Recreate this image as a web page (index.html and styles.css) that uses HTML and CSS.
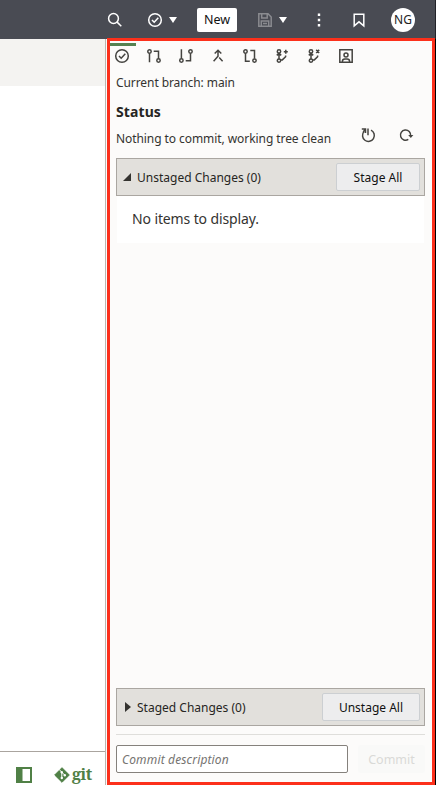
FILE: index.html
```
<!DOCTYPE html>
<html lang="en">
<head>
<meta charset="utf-8">
<title>Git panel</title>
<link rel="stylesheet" href="styles.css">
</head>
<body>
<div class="app">
  <header class="topbar">
    <svg class="icon search" viewBox="0 0 16 16"><circle cx="6.5" cy="6.5" r="4.9"/><path d="M10.1 10.1L14.3 14.3"/></svg>
    <svg class="icon validate" viewBox="0 0 16 16"><circle cx="8" cy="8" r="6.3"/><path d="M5 8l2.2 2.2L11.3 5.8"/></svg>
    <i class="caret"></i>
    <button class="new">New</button>
    <svg class="icon save" viewBox="0 0 16 16"><path d="M1.8 1.8H11l3.2 3.2v9.2H1.8zM4.7 2v4h5.5V2M4.3 14V9h7.4v5M6 11.5h4"/></svg>
    <i class="caret"></i>
    <svg class="icon more" viewBox="0 0 16 16"><path d="M6.8 1.5h2.4v2.4H6.8zM6.8 6.8h2.4v2.4H6.8zM6.8 12.1h2.4v2.4H6.8z"/></svg>
    <svg class="icon bookmark" viewBox="0 0 16 16"><path d="M3.2 2.2h9.6v11.6L8 9.8l-4.8 4z"/></svg>
    <span class="avatar">NG</span>
  </header>
  <div class="workspace">
    <div class="editor">
      <div class="editor-tabs"></div>
      <div class="canvas"></div>
      <footer class="statusbar">
        <svg class="layout-icon" viewBox="0 0 16 16"><path fill-rule="evenodd" d="M0 0h16v16H0zM6.5 2v12H14V2z"/></svg>
        <svg class="git-mark" viewBox="0 0 16 16"><path class="diamond" d="M8 .7L15.3 8 8 15.3.7 8z"/><path class="branch" d="M5.2 2.6L7.8 5.2V11M8 5.4l2.7 2.7"/><circle cx="7.8" cy="5.3" r="1.2"/><circle cx="7.8" cy="11" r="1.2"/><circle cx="10.8" cy="8.2" r="1.2"/></svg>
        <span class="git-word">git</span>
      </footer>
    </div>
    <section class="panel">
      <nav class="tabs">
        <a class="tab active"><svg class="icon" viewBox="0 0 16 16"><circle cx="8" cy="8" r="6.3"/><path d="M5 8l2.2 2.2L11.3 5.8"/></svg></a>
        <a class="tab"><svg class="icon" viewBox="0 0 16 16"><circle cx="3.5" cy="3.5" r="1.7"/><path d="M3.5 5.2v9M7.7 3.3h4.8v7.4"/><circle cx="12.5" cy="12.5" r="1.7"/></svg></a>
        <a class="tab"><svg class="icon" viewBox="0 0 16 16"><path d="M3.4 1.2v9.4M7.7 12.7h4.8V5.2"/><circle cx="3.4" cy="12.5" r="1.7"/><circle cx="12.5" cy="3.5" r="1.7"/></svg></a>
        <a class="tab"><svg class="icon" viewBox="0 0 16 16"><path d="M8 2.5v5.8l-4.4 5M4.7 5.5L8 2.3l3.3 3.2M9.2 9.6l3.4 3.7"/></svg></a>
        <a class="tab"><svg class="icon" viewBox="0 0 16 16"><circle cx="3.5" cy="3.5" r="1.7"/><path d="M3.5 5.2v8h4.3M8.3 2.4h4.2v8.3"/><circle cx="12.5" cy="12.6" r="1.7"/></svg></a>
        <a class="tab"><svg class="icon" viewBox="0 0 16 16"><circle cx="5" cy="3.4" r="1.7"/><circle cx="5" cy="12.6" r="1.7"/><path d="M5 5.1v5.8M2.8 7.4L5 5.3l2.2 2.1M6.7 11.9h1.6l3.3-3.2V7.4M11.8 1.7v4M9.8 3.7h4"/></svg></a>
        <a class="tab"><svg class="icon" viewBox="0 0 16 16"><circle cx="5" cy="3.4" r="1.7"/><circle cx="5" cy="12.6" r="1.7"/><path d="M5 5.1v5.8M2.8 7.4L5 5.3l2.2 2.1M6.7 11.9h1.6l3.3-3.2V7.4M10.2 1.9l3 3M13.2 1.9l-3 3"/></svg></a>
        <a class="tab"><svg class="icon" viewBox="0 0 16 16"><path d="M1.8 1.8h12.4v12.4H1.8zM4.4 14v-.6q0-2.3 2.4-2.3h2.4q2.4 0 2.4 2.3v.6"/><circle cx="8" cy="6.9" r="2"/></svg></a>
      </nav>
      <div class="content">
        <div class="branch-name"><span>Current branch: main</span></div>
        <h2>Status</h2>
        <div class="status-row">
          <span class="status-text">Nothing to commit, working tree clean</span>
          <svg class="icon reset" viewBox="0 0 16 16"><path d="M11 3.2a5.9 5.9 0 1 1-7 1.4M1.8 2.1h3.7V6M5.3 2.3L3.2 5M8 1.5v6.7"/></svg>
          <svg class="icon refresh" viewBox="0 0 16 16"><path d="M10.3 12.4A5.1 5.1 0 1 1 12.6 8.8"/><path class="solid" d="M10.2 8h5.2l-2.6 2.9z"/></svg>
        </div>
        <div class="group">
          <i class="open"></i><span class="unstaged-label">Unstaged Changes (0)</span><button class="stage"><span>Stage All</span></button>
        </div>
        <div class="empty"><span>No items to display.</span></div>
        <div class="group staged">
          <i class="closed"></i><span class="staged-label">Staged Changes (0)</span><button class="unstage"><span>Unstage All</span></button>
        </div>
        <div class="commit-row">
          <input type="text" placeholder="Commit description">
          <button class="commit" disabled>Commit</button>
        </div>
      </div>
    </section>
  </div>
  <div class="highlight"></div>
</div>
</body>
</html>
```
FILE: styles.css
```
* { box-sizing: border-box; }
body { margin: 0; font-family: "Noto Sans", sans-serif; font-size: 12px; color: #343330; }
button, input { font: inherit; padding: 0; margin: 0; }
.app { position: relative; width: 436px; height: 785px; display: flex; flex-direction: column; overflow: hidden; background: #fff; }
.icon { width: 16px; height: 16px; flex: none; fill: none; stroke: #454440; stroke-width: 1.5; }

.topbar { height: 39px; flex: none; display: flex; align-items: center; background: #494b53; padding-left: 107px; border-right: 1px solid #222329; }
.topbar .icon { stroke: #fff; }
.validate { margin-left: 24px; }
.caret { flex: none; width: 0; height: 0; margin: 1px 0 0 6px; border: 4.5px solid transparent; border-top: 6px solid #fff; border-bottom: 0; }
.new { width: 40px; height: 24px; flex: none; margin-left: 20px; border: 0; border-radius: 2px; background: #fff; color: #111; font-size: 12.5px; }
.topbar .save { margin-left: 20px; stroke: #8a8b90; }
.topbar .more { margin-left: 24px; fill: #fff; stroke: none; }
.bookmark { margin-left: 24px; }
.avatar { width: 24px; height: 24px; flex: none; margin-left: 24px; border-radius: 50%; background: #fff; color: #222; text-align: center; line-height: 24px; }

.workspace { flex: 1; min-height: 0; display: flex; border-right: 1px solid #000; }
.editor { width: 106px; flex: none; display: flex; flex-direction: column; border-right: 1px solid #bbb5b0; }
.editor-tabs { height: 47px; background: #f4f3f1; }
.canvas { flex: 1; }
.statusbar { height: 34px; display: flex; align-items: flex-start; padding: 15px 0 0 16px; border-top: 1px solid #aaa49f; color: #508046; }
.layout-icon { width: 16px; height: 16px; fill: #508046; }
.git-mark { width: 16px; height: 16px; margin-left: 22px; }
.diamond { fill: #508046; stroke: #508046; stroke-linejoin: round; }
.branch { fill: none; stroke: #fff; }
.git-mark circle { fill: #fff; }
.git-word { margin: -3px 0 0 2px; font: bold 16px/20px "Noto Serif", "DejaVu Serif", serif; letter-spacing: -.4px; }

.panel { flex: 1; min-width: 0; display: flex; flex-direction: column; background: #fcfbfa; }
.tabs { height: 33px; flex: none; display: flex; }
.tab { width: 32px; padding: 9px 0 0 8px; line-height: 0; }
.tab.active { padding-top: 5px; border-top: 4px solid #fcfbfa; background: linear-gradient(#568252, #568252) 3px 0 / 27px 3px no-repeat padding-box; }
.content { flex: 1; min-height: 0; display: flex; flex-direction: column; padding: 0 10px; white-space: nowrap; }
.branch-name { height: 24px; line-height: 22px; letter-spacing: -.08px; }
h2 { margin: 4px 0 0; font-size: 14px; line-height: 24px; height: 25px; color: #262522; letter-spacing: .1px; }
.status-row { display: flex; height: 33px; line-height: 28px; }
.status-text { width: 215px; letter-spacing: -.07px; }
.reset { margin: 2px 0 0 29px; }
.refresh { margin: 2px 0 0 22px; }
.refresh .solid { fill: #454440; stroke: none; }
.group { height: 38px; flex: none; display: flex; align-items: center; padding-right: 4px; border: 1px solid #aaa6a1; background: #e2e0dc; }
.open { width: 0; margin-left: 6px; border-left: 8px solid transparent; border-bottom: 8px solid #343330; }
.closed { width: 0; margin-left: 8px; border: 5.5px solid transparent; border-left: 6px solid #343330; border-right: 0; }
.group span { color: #262522; }
.group > span { margin-left: 6px; }
.group button { height: 28px; margin-left: auto; border: 1px solid #cccfd2; border-radius: 2px; background: #ededee; }
.group button span { color: #111; }
.stage { width: 84px; }
.unstage { width: 98px; }
.empty { height: 47px; background: #fff; margin: 0 1px; padding-left: 15px; font-size: 14px; line-height: 46px; letter-spacing: -.12px; }
.staged { margin-top: auto; }
.commit-row { display: flex; justify-content: space-between; height: 51px; flex: none; margin-top: 8px; padding-top: 10px; border-top: 1px solid #dfdedb; }
.commit-row input { width: 232px; height: 28px; padding: 0 5px; border: 1px solid #85817c; border-radius: 2px; background: #fff; letter-spacing: .15px; }
.commit-row input::placeholder { color: #757370; font-style: italic; opacity: 1; }
.commit { width: 67px; height: 28px; border: 0; border-radius: 2px; background: #f9f9f8; color: #d9d9d7; font-size: 12.5px; }
.highlight { position: absolute; left: 107px; top: 38px; width: 328px; height: 747px; border: 3px solid #fc301b; pointer-events: none; }
```
